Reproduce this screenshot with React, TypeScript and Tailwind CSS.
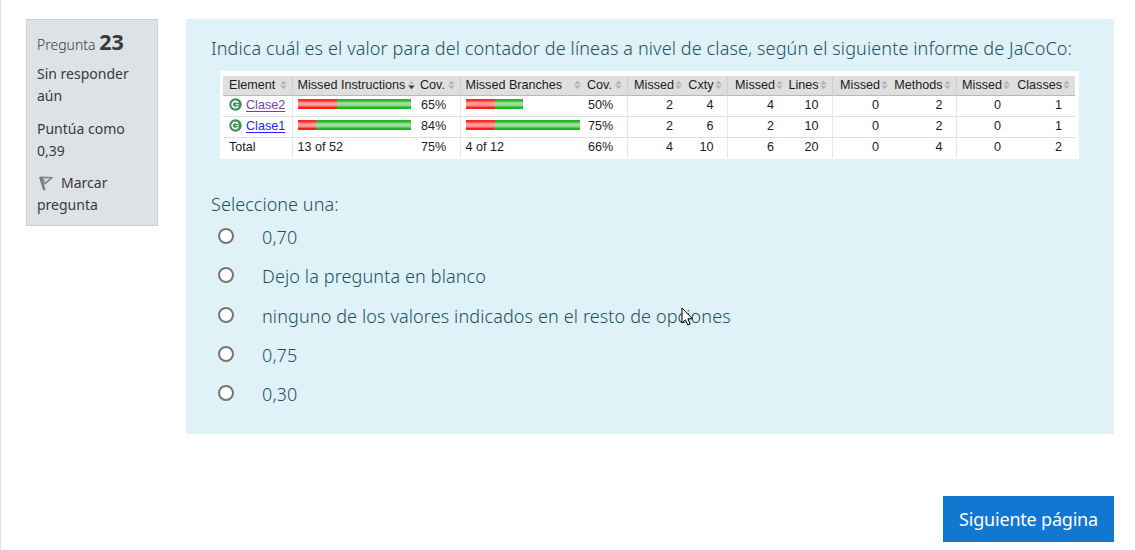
import type { ReactNode } from 'react';

const options = [
  '0,70',
  'Dejo la pregunta en blanco',
  'ninguno de los valores indicados en el resto de opciones',
  '0,75',
  '0,30',
];

const columns = [69, 123, 45, 122, 45, 56, 44, 57, 48, 57, 67, 55, 64];

const counters: { label: string; values: number[] }[] = [
  { label: 'Missed', values: [2, 2, 4] },
  { label: 'Cxty', values: [4, 6, 10] },
  { label: 'Missed', values: [4, 2, 6] },
  { label: 'Lines', values: [10, 10, 20] },
  { label: 'Missed', values: [0, 0, 0] },
  { label: 'Methods', values: [2, 2, 4] },
  { label: 'Missed', values: [0, 0, 0] },
  { label: 'Classes', values: [1, 1, 2] },
];

function SortIcon({ active = false }: { active?: boolean }) {
  return (
    <svg width="7" height="10" viewBox="0 0 7 10" className="shrink-0">
      <path d="M3.5 0.6 6.8 4.3H0.2Z" fill={active ? '#c4c0bf' : '#b4b4b4'} />
      <path d="M3.5 9.2 6.8 5.4H0.2Z" fill={active ? '#4a3a35' : '#b4b4b4'} />
    </svg>
  );
}

function ClassIcon() {
  return (
    <svg width="13" height="13" viewBox="0 0 13 13" className="shrink-0">
      <circle cx="6.5" cy="6.5" r="6.2" fill="#3f9158" />
      <path d="M9.1 4.9A3.2 3.2 0 1 0 9.1 8.1" fill="none" stroke="#fff" strokeWidth="1.7" />
      <path d="M6.4 6.5H10" stroke="#d5eadb" strokeWidth="1.1" />
    </svg>
  );
}

function Bar({ missed, covered }: { missed: number; covered: number }) {
  return (
    <div className="mb-[3px] flex h-[10px]">
      <div
        className="bg-[linear-gradient(#ff2a26_0_15%,#ff7b78_30%,#ffabab_50%,#ff7b78_70%,#ff1c1c_85%)]"
        style={{ width: missed }}
      />
      <div
        className="bg-[linear-gradient(#22b822_0_15%,#7bd07b_30%,#abe5ab_50%,#7bd07b_70%,#1cb81c_85%)]"
        style={{ width: covered }}
      />
    </div>
  );
}

function Head({ children, className, active }: { children: ReactNode; className: string; active?: boolean }) {
  return (
    <th className={`p-0 font-normal ${className}`}>
      <div className="flex items-center whitespace-nowrap">
        <span className="grow">{children}</span>
        <SortIcon active={active} />
      </div>
    </th>
  );
}

function CounterCells({ row }: { row: number }) {
  return (
    <>
      {counters.map((c, i) => (
        <td
          key={i}
          className={i % 2 === 0 ? 'border-l border-[#e6e6e6] p-0 pr-[10px] pb-[2px] text-right' : 'p-0 pr-[13px] pb-[2px] text-right'}
        >
          {c.values[row]}
        </td>
      ))}
    </>
  );
}

function Report() {
  const rows = [
    { name: 'Clase2', link: 'text-[#7a3ea8]', a: [39, 74], ac: '65%', b: [29, 28], bc: '50%' },
    { name: 'Clase1', link: 'text-[#2a1ff0]', a: [18, 95], ac: '84%', b: [29, 85], bc: '75%' },
  ];
  return (
    <div className="ml-[9px] h-[88px] w-[859px] bg-white pt-[5px] pl-[3px]">
      <table className="w-[852px] table-fixed border-collapse font-['Liberation_Sans',Arial,sans-serif] text-[12.6px] leading-[18px] text-[#1c1c1c]">
        <colgroup>
          {columns.map((w, i) => (
            <col key={i} style={{ width: w }} />
          ))}
        </colgroup>
        <thead>
          <tr className="h-[19px] border-b border-[#b8b8b8] bg-[#dfdfdf] text-left">
            <Head className="pr-[5px] pl-[6px]">Element</Head>
            <Head className="border-l border-[#cfcfcf] pr-0 pl-[5px]" active>Missed Instructions</Head>
            <Head className="pr-[5px] pl-[5px]">Cov.</Head>
            <Head className="border-l border-[#cfcfcf] pr-[1px] pl-[5px]">Missed Branches</Head>
            <Head className="pr-[5px] pl-[5px]">Cov.</Head>
            {counters.map((c, i) => (
              <Head
                key={i}
                className={i % 2 === 0 ? 'border-l border-[#cfcfcf] pr-[1px] text-right' : 'pr-[5px] text-right'}
              >
                <span className="pr-[1px]">{c.label}</span>
              </Head>
            ))}
          </tr>
        </thead>
        <tbody>
          {rows.map((r, i) => (
            <tr key={r.name} className="h-[21px] border-b border-[#dededa]">
              <td className="p-0 pb-[2px] pl-[6px]">
                <div className="flex items-center gap-[4px]">
                  <ClassIcon />
                  <span className={`underline underline-offset-2 ${r.link}`}>{r.name}</span>
                </div>
              </td>
              <td className="border-l border-[#e6e6e6] p-0 pl-[5px]">
                <Bar missed={r.a[0]} covered={r.a[1]} />
              </td>
              <td className="p-0 pb-[2px] pl-[6px]">{r.ac}</td>
              <td className="border-l border-[#e6e6e6] p-0 pl-[5px]">
                <Bar missed={r.b[0]} covered={r.b[1]} />
              </td>
              <td className="p-0 pb-[2px] pl-[6px]">{r.bc}</td>
              <CounterCells row={i} />
            </tr>
          ))}
          <tr className="h-[20px]">
            <td className="p-0 pb-[2px] pl-[6px]">Total</td>
            <td className="border-l border-[#e6e6e6] p-0 pb-[2px] pl-[5px]">13 of 52</td>
            <td className="p-0 pb-[2px] pl-[6px]">75%</td>
            <td className="border-l border-[#e6e6e6] p-0 pb-[2px] pl-[5px]">4 of 12</td>
            <td className="p-0 pb-[2px] pl-[6px]">66%</td>
            <CounterCells row={2} />
          </tr>
        </tbody>
      </table>
    </div>
  );
}

function Flag() {
  return (
    <svg width="16" height="16" viewBox="0 0 16 16" className="mr-[8px] inline-block align-[-3px]">
      <path d="M3.2 1.8 7.4 15" stroke="#777" strokeWidth="2.4" fill="none" />
      <path d="M5 2.2 15 2.6 8 8.8Z" stroke="#858585" strokeWidth="1.5" fill="#d2d4d6" />
    </svg>
  );
}

export default function App() {
  return (
    <div className="h-[550px] w-[1135px] overflow-hidden border-l border-[#dee2e6] bg-white pt-[19px] pl-[25px] font-['Noto_Sans','Open_Sans',sans-serif]">
      <div className="flex items-start gap-[28px]">
        <aside className="h-[207px] w-[132px] border border-[#cad0d7] bg-[#dee2e6] px-[10px] pt-[8px] text-[14px] leading-[22px] whitespace-nowrap text-[#373a3c]">
          <h3 className="h-[30px] leading-[28px] font-light">
            Pregunta <b className="text-[21.5px] font-bold">23</b>
          </h3>
          <p className="mt-[5px]">Sin responder<br />aún</p>
          <p className="mt-[11px]">Puntúa como<br />0,39</p>
          <p className="mt-[10px]"><Flag />Marcar<br />pregunta</p>
        </aside>
        <main className="h-[415px] w-[928px] bg-[#def2f8] pt-[14px] pl-[25px] text-[18px] font-[350] text-[#1c5163]">
          <p className="h-[38px] leading-[30px] tracking-[0.127px] whitespace-nowrap">
            Indica cuál es el valor para del contador de líneas a nivel de clase, según el siguiente informe de JaCoCo:
          </p>
          <Report />
          <p className="mt-[30px] h-[30px] leading-[30px] tracking-[0.06px]">Seleccione una:</p>
          <div className="flex flex-col">
            {options.map((o) => (
              <label key={o} className="flex h-[39.25px] items-start pl-[7px]">
                <span className="mt-[9px] h-4 w-4 shrink-0 rounded-full border-2 border-[#767676] bg-white" />
                <span className="relative ml-[28px] leading-[36px] tracking-[0.125px] whitespace-nowrap">
                  {o}
                  {o.startsWith('ninguno') && (
                    <svg width="13" height="20" viewBox="0 0 13 20" className="absolute top-[9px] left-[419px]">
                      <path d="M1 1V16L4.4 12.8 6.8 18 9.2 17 6.9 11.8H11.5Z" fill="#fff" stroke="#000" />
                    </svg>
                  )}
                </span>
              </label>
            ))}
          </div>
        </main>
      </div>
      <div className="mt-[62px] flex justify-end pr-[21px]">
        <button className="h-[46px] w-[171px] bg-[#1177d1] text-[18px] leading-[46px] tracking-[-0.2px] whitespace-nowrap text-white">Siguiente página</button>
      </div>
    </div>
  );
}
